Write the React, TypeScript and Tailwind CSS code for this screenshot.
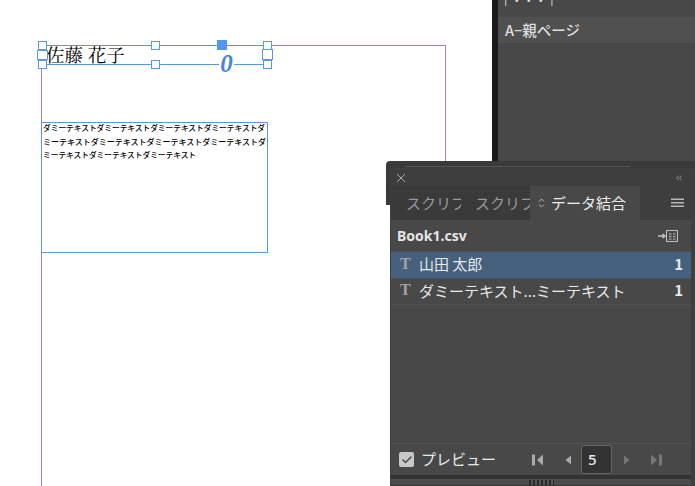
import { Check, ChevronsLeft, X } from "lucide-react";

const jp = "font-['Noto_Sans_CJK_JP','Noto_Sans',sans-serif]";

const Handle = ({ className }: { className: string }) => (
  <div className={`absolute bg-white border-[1.5px] border-[#5b97dc] ${className}`} />
);

const Row = ({ label, selected }: { label: string; selected?: boolean }) => (
  <div className={`h-[26.5px] flex items-center pl-[9px] pr-[8px] pb-[2px] text-[15px] text-[#e8e8e8] border-b border-[#525252] ${selected ? "bg-[#45617d]" : ""}`}>
    <span className="w-[19px] font-['Liberation_Serif',serif] font-bold text-[16px] text-[#a3a3a3]">T</span>
    <span className="flex-1 leading-none">{label}</span>
    <span className="font-bold text-[15px]">1</span>
  </div>
);

// first/prev/next/last buttons of the record pager
const Pager = ({ kind, color }: { kind: "first" | "prev" | "next" | "last"; color: string }) => {
  const flip = kind === "next" || kind === "last";
  const bar = kind === "first" || kind === "last";
  return (
    <svg width="11" height="12" viewBox="0 0 11 12" fill={color} className={flip ? "-scale-x-100" : ""}>
      {bar && <rect x="0" y="0.500" width="3" height="11" />}
      <path d={bar ? "M11 0.500v11L5 6z" : "M9 1.500v9L3.500 6z"} />
    </svg>
  );
};

export default function App() {
  return (
    <div className={`relative w-[695px] h-[486px] overflow-hidden bg-white ${jp}`}>
      {/* page edge */}
      <div className="absolute left-[41px] top-[45px] w-[405px] h-[460px] border border-[#b07abf]" />

      {/* name frame */}
      <div className="absolute left-[42px] top-[45px] w-[226px] h-[20px] border border-[#5b97dc]">
        <span className="absolute left-[3px] top-[-5px] text-[18.500px] leading-[26px] text-black font-['Noto_Serif_CJK_JP','Liberation_Serif','Noto_Sans_CJK_JP',serif] whitespace-nowrap">佐藤 花子</span>
      </div>
      <Handle className="left-[38px] top-[41px] w-[9px] h-[9px]" />
      <Handle className="left-[37px] top-[50px] w-[11px] h-[10px]" />
      <Handle className="left-[38px] top-[60px] w-[9px] h-[9px]" />
      <Handle className="left-[151px] top-[41px] w-[9px] h-[9px]" />
      <Handle className="left-[151px] top-[60px] w-[9px] h-[9px]" />
      <div className="absolute left-[217px] top-[40px] w-[10px] h-[10px] bg-[#4f96f5]" />
      <Handle className="left-[263px] top-[41px] w-[9px] h-[9px]" />
      <Handle className="left-[262px] top-[49px] w-[11px] h-[11px]" />
      <Handle className="left-[263px] top-[60px] w-[9px] h-[9px]" />
      <span className="absolute left-[219px] top-[52px] w-[15px] h-[20px] bg-white text-center font-['Liberation_Serif',serif] italic font-bold text-[25px] leading-[24px] text-[#4a86d0]">0</span>

      {/* body frame */}
      <div className="absolute left-[41px] top-[122px] w-[227px] h-[131px] border border-[#5b97dc] pl-[1px] overflow-hidden text-[7.700px] leading-[13.500px] text-black font-medium whitespace-nowrap">
        <div className="-mt-[2px]">
          <div>ダミーテキストダミーテキストダミーテキストダミーテキストダ</div>
          <div className="text-[8px]">ミーテキストダミーテキストダミーテキストダミーテキストダ</div>
          <div>ミーテキストダミーテキストダミーテキスト</div>
        </div>
      </div>

      {/* pages panel behind */}
      <div className="absolute left-[492px] top-0 w-[203px] h-[170px] bg-[#484848] border-l-[6px] border-l-[#1a1a1a]">
        <div className="h-[6px] px-[6px] text-[#ddd] text-[12px] leading-[2px] overflow-hidden">[ ・・・ ]</div>
        <div className="mt-[11px] h-[26px] bg-[#505050] pl-[7px] flex items-center text-[14.500px] font-medium text-[#dedede]">A−親ページ</div>
      </div>

      {/* strip of the docked panel group under the data merge panel */}
      <div className="absolute left-[386px] top-[161px] w-[309px] h-[44px] bg-[#3a3a3a] rounded-tl-[4px]">
        <div className="ml-[19px] mt-[5px] w-[225px] h-[1px] bg-[#565656]" />
      </div>

      {/* data merge panel */}
      <div className="absolute left-[390px] top-[168px] w-[305px] h-[318px] bg-[#3f3f3f] pl-[1px] pt-[1px]">
        <div className="w-[300px] h-[317px] flex flex-col bg-[#484848]">
          <div className="h-[17px] shrink-0 bg-[#3e3e3e] flex items-center justify-between pl-[3px] pr-[5px] text-[#bdbdbd]">
            <X size={14} strokeWidth={1.5} />
            <ChevronsLeft size={10} strokeWidth={1.5} className="mr-[2px]" />
          </div>
          <div className="h-[34px] shrink-0 flex bg-[#3e3e3e] text-[15px]">
            <div className="w-[70px] pl-[15px] bg-[#3a3a3a] text-[#999] flex items-center overflow-hidden whitespace-nowrap">スクリプ</div>
            <div className="w-[69px] pl-[14px] bg-[#3a3a3a] text-[#999] flex items-center overflow-hidden whitespace-nowrap">スクリプ</div>
            <div className="w-[110px] pl-[8px] bg-[#484848] text-[#ececec] flex items-center gap-[6px] whitespace-nowrap">
              <svg width="7" height="10" viewBox="0 0 7 10" fill="none" stroke="#bbb" strokeWidth="1">
                <path d="M1 3.500 3.500 1 6 3.500M1 6.500 3.500 9 6 6.500" />
              </svg>
              データ結合
            </div>
            <div className="flex-1 flex items-center justify-end pr-[7px]">
              <svg width="13" height="10" viewBox="0 0 13 10" fill="#b8b8b8">
                <rect y="0.500" width="13" height="1.500" />
                <rect y="4" width="13" height="1.500" />
                <rect y="7.500" width="13" height="1.500" />
              </svg>
            </div>
          </div>
          <div className="h-[32px] shrink-0 flex items-center justify-between pl-[6px] pr-[13px] border-b border-[#525252]">
            <span className="text-[14px] font-bold text-[#e6e6e6] font-['Noto_Sans',sans-serif]">Book1.csv</span>
            <svg width="20" height="14" viewBox="0 0 20 14" fill="none" stroke="#c4c4c4" strokeWidth="1">
              <path d="M0 7h6M4.500 5 7 7l-2.500 2" strokeWidth="1.600" />
              <rect x="8.500" y="1.500" width="11" height="11" />
              <path d="M11 5h2.500M15 5h2.500M11 7.500h2.500M15 7.500h2.500M11 10h2.500M15 10h2.500" />
            </svg>
          </div>
          <Row label="山田 太郎" selected />
          <Row label="ダミーテキスト...ミーテキスト" />
          <div className="flex-1 border-b border-[#525252]" />
          <div className="h-[31px] shrink-0 flex items-center pl-[8px] text-[#e8e8e8]">
            <div className="w-[15px] h-[15px] rounded-[2px] bg-[#c8c8c8] flex items-center justify-center">
              <Check size={12} strokeWidth={3} className="text-[#444]" />
            </div>
            <span className="ml-[7px] text-[15px] w-[111px]">プレビュー</span>
            <Pager kind="first" color="#aaa" />
            <div className="ml-[19px]"><Pager kind="prev" color="#aaa" /></div>
            <div className="ml-[8px] w-[31px] h-[29px] bg-[#333] border border-[#666] rounded-[2px] pl-[6px] flex items-center text-[15px] font-medium font-['Noto_Sans',sans-serif]">5</div>
            <div className="ml-[10px]"><Pager kind="next" color="#777" /></div>
            <div className="ml-[18px]"><Pager kind="last" color="#777" /></div>
          </div>
          <div className="h-[4px] shrink-0 bg-[#333]" />
          <div className="h-[6px] shrink-0 bg-[#4c4c4c] flex items-center justify-center">
            <div className="w-[25px] h-[5px] bg-[repeating-linear-gradient(90deg,#2a2a2a_0,#2a2a2a_2px,#555_2px,#555_4px)]" />
          </div>
          <div className="h-[1px] shrink-0 bg-[#333]" />
        </div>
      </div>
    </div>
  );
}
